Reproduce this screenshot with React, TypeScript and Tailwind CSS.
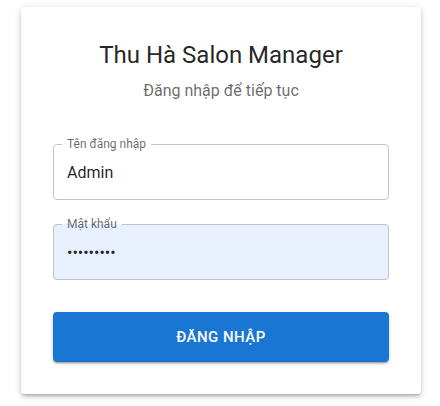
import React, { useState } from 'react';

const font = { fontFamily: 'Roboto, "Noto Sans", sans-serif' };

interface OutlinedFieldProps {
    label: string;
    value: string;
    type?: string;
    filled?: boolean;
    onChange: (v: string) => void;
}

// Outlined text field with a notched border (fieldset + legend)
const OutlinedField: React.FC<OutlinedFieldProps> = ({ label, value, type = 'text', filled, onChange }) => (
    <fieldset
        className={`m-0 rounded border border-[#c4c4c4] px-2 pb-[5px] ${filled ? 'bg-[#e8f0fe]' : 'bg-white'}`}
    >
        <legend className="px-[5px] text-xs leading-3 text-[rgba(0,0,0,0.6)]">{label}</legend>
        <input
            type={type}
            value={value}
            onChange={e => onChange(e.target.value)}
            className="block h-[44px] w-full bg-transparent px-[5px] text-base text-[rgba(0,0,0,0.87)] outline-none"
        />
    </fieldset>
);

export default function App() {
    const [username, setUsername] = useState('Admin');
    const [password, setPassword] = useState('123456789');

    return (
        <div className="min-h-screen bg-white px-[21px] pt-[7px]" style={font}>
            <div className="w-[400px] rounded bg-white p-8 shadow-[0px_3px_3px_-2px_rgba(0,0,0,0.2),0px_3px_4px_0px_rgba(0,0,0,0.14),0px_1px_8px_0px_rgba(0,0,0,0.12)]">
                {/* Header */}
                <h1 className="text-center text-2xl leading-8 font-normal text-[rgba(0,0,0,0.87)]">
                    Thu Hà Salon Manager
                </h1>
                <p className="mt-2 text-center text-base leading-6 text-[rgba(0,0,0,0.6)]">
                    Đăng nhập để tiếp tục
                </p>

                {/* Form */}
                <form className="mt-[35px] flex flex-col" onSubmit={e => e.preventDefault()}>
                    <OutlinedField label="Tên đăng nhập" value={username} onChange={setUsername} />
                    <div className="mt-[18px]">
                        <OutlinedField label="Mật khẩu" type="password" value={password} filled onChange={setPassword} />
                    </div>
                    <button
                        type="submit"
                        className="mt-8 rounded bg-[#1976d2] py-3 text-[15px] leading-[26px] font-medium tracking-[0.46px] text-white uppercase shadow-[0px_3px_1px_-2px_rgba(0,0,0,0.2),0px_2px_2px_0px_rgba(0,0,0,0.14),0px_1px_5px_0px_rgba(0,0,0,0.12)]"
                    >
                        Đăng nhập
                    </button>
                </form>
            </div>
        </div>
    );
}
